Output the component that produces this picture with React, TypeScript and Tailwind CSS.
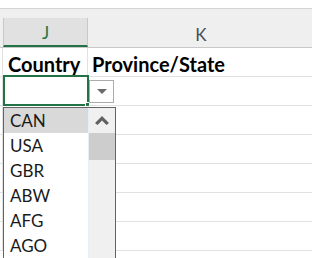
const countries = ['CAN', 'USA', 'GBR', 'ABW', 'AFG', 'AGO'];

const App = () => {
  return (
    <div className="relative w-[312px] h-[258px] overflow-hidden bg-white font-['Lato','Open_Sans',sans-serif]">
      {/* top strip */}
      <div className="h-[9px] bg-white border-b border-[#d4d4d4]" />

      {/* column headers */}
      <div className="flex h-[39px] bg-[#efefef] border-b border-[#c8c8c8]">
        <div className="w-[3px]" />
        <div className="w-[85px] mt-[9px] pt-[3px] bg-[#e1e1e1] border-l border-r border-[#c8c8c8] border-b-2 border-b-[#217346] flex items-center justify-center text-[17px] text-[#217346]">
          J
        </div>
        <div className="flex-1 mt-[9px] pt-[4px] flex items-center justify-center text-[17px] text-[#4a4f57] pl-[2px]">
          K
        </div>
      </div>

      {/* grid rows */}
      {Array.from({ length: 7 }).map((_, i) => (
        <div key={i} className="flex h-[29px] border-b border-[#e1e1e1]">
          <div className="w-[3px] border-r border-[#e1e1e1]" />
          <div className="w-[85px] border-r border-[#e1e1e1] flex items-center pl-[5px] pt-[3px] text-[20px] font-bold text-black">
            {i === 0 ? 'Country' : ''}
          </div>
          <div className="flex-1 flex items-center pl-[4px] pt-[3px] text-[20px] font-bold text-black">
            {i === 0 ? 'Province/State' : ''}
          </div>
        </div>
      ))}

      {/* active cell */}
      <div className="absolute left-[3px] top-[75px] w-[86px] h-[31px] border-2 border-[#217346]" />
      <div className="absolute left-[85px] top-[102px] w-[5px] h-[5px] bg-[#217346] border border-white" />

      {/* dropdown button */}
      <div className="absolute left-[89px] top-[80px] w-[25px] h-[23px] bg-white border border-[#ababab] flex items-center justify-center">
        <svg width="10" height="6" viewBox="0 0 10 6">
          <path d="M0 0 H10 L5 5 Z" fill="#6a6a6a" />
        </svg>
      </div>

      {/* validation list */}
      <div className="absolute left-[3px] top-[107px] w-[113px] h-[160px] bg-white border border-[#646464] flex">
        <div className="w-[85px] border-r border-[#e6eefb] flex flex-col">
          {countries.map((c, i) => (
            <div
              key={c}
              className={`h-[25px] shrink-0 flex items-center pl-[6px] pt-[1px] text-[17px] text-[#1a1a1a] ${i === 0 ? 'bg-[#d9d9d9]' : ''}`}
            >
              {c}
            </div>
          ))}
        </div>
        <div className="flex-1 bg-[#f0f0f0] flex flex-col">
          <div className="h-[25px] flex items-center justify-center">
            <svg width="14" height="9" viewBox="0 0 14 9">
              <path d="M7 0 L14 7 L11.5 9 L7 4.5 L2.5 9 L0 7 Z" fill="#606060" />
            </svg>
          </div>
          <div className="h-[27px] bg-[#cdcdcd]" />
        </div>
      </div>
    </div>
  );
};

export default App;
